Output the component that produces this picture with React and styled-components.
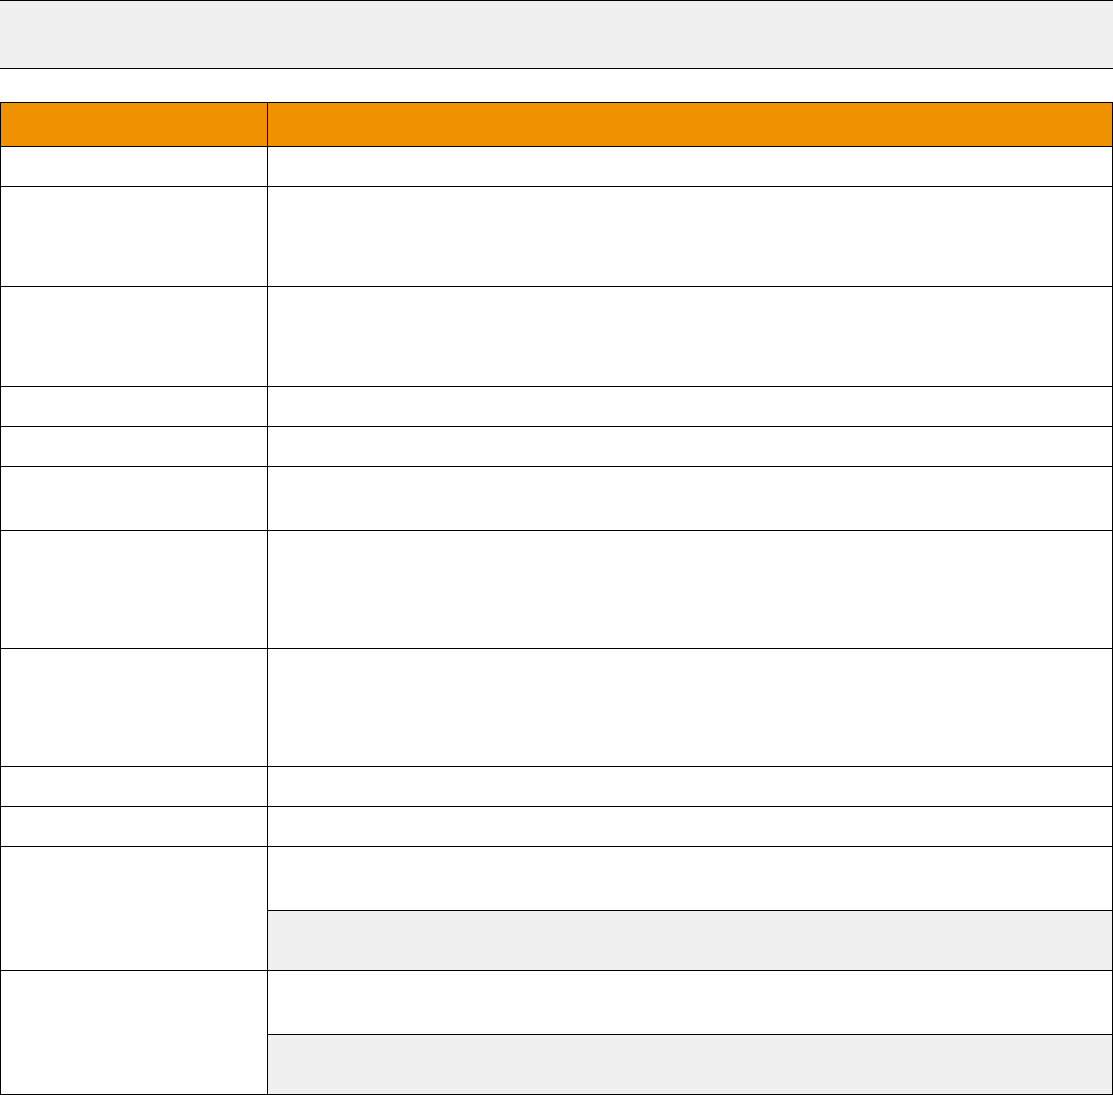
import styled, { createGlobalStyle } from "styled-components";

const GlobalStyle = createGlobalStyle`
  html, body {
    margin: 0;
    padding: 0;
    background: #ffffff;
    font-family: "Liberation Sans", Arial, sans-serif;
  }
`;

// styles
const Banner = styled.header`
  height: 67px;
  background-color: #f0f0f0;
  border-top: 1px solid #000;
  border-bottom: 1px solid #000;
`;

const Table = styled.table`
  margin-top: 33px;
  width: 1113px;
  border-collapse: collapse;
  table-layout: fixed;
  border: 1px solid #000;
`;

const HeadCell = styled.th`
  background-color: #f09200;
  border: 1px solid #000;
  padding: 0;
`;

const Row = styled.tr`
  height: ${(p) => p.$h}px;
`;

const Cell = styled.td`
  border: 1px solid #000;
  padding: 0;
  background-color: ${(p) => (p.$shade ? "#f0f0f0" : "#ffffff")};
`;

const rows = [40, 100, 100, 40, 40, 64, 118, 118, 40, 40];
const splitRows = [
  [64, 60],
  [64, 60],
];

const App = () => {
  return (
    <>
      <GlobalStyle />
      <Banner />
      <Table>
        <colgroup>
          <col style={{ width: 267 }} />
          <col />
        </colgroup>
        <thead>
          <Row $h={44}>
            <HeadCell />
            <HeadCell />
          </Row>
        </thead>
        <tbody>
          {rows.map((h, i) => (
            <Row key={i} $h={h}>
              <Cell />
              <Cell />
            </Row>
          ))}
          {splitRows.map(([a, b], i) => (
            <>
              <Row key={`a${i}`} $h={a}>
                <Cell rowSpan={2} />
                <Cell />
              </Row>
              <Row key={`b${i}`} $h={b}>
                <Cell $shade />
              </Row>
            </>
          ))}
        </tbody>
      </Table>
    </>
  );
};

export default App;
